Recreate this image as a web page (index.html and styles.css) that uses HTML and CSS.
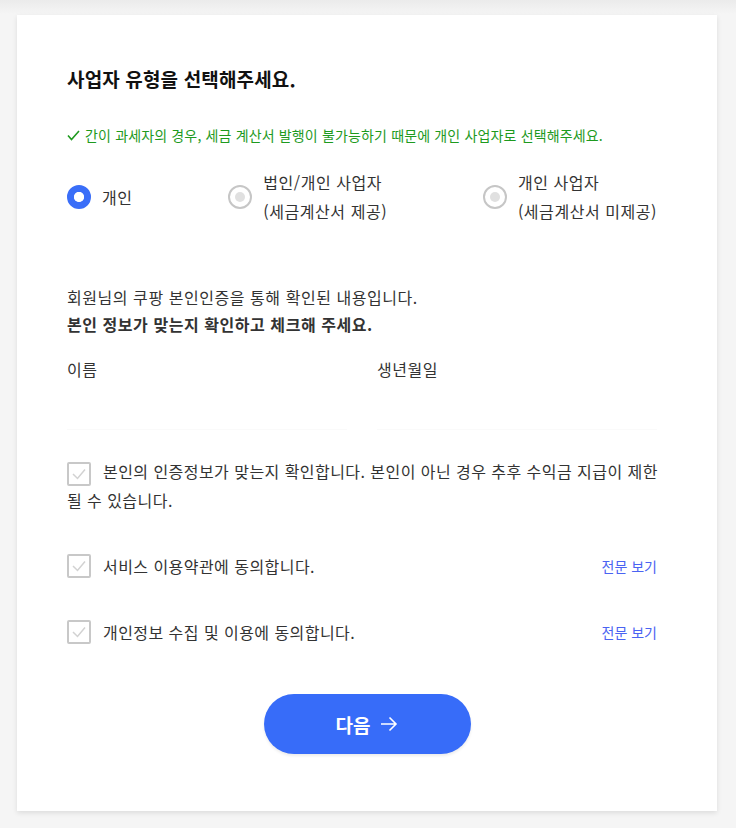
FILE: index.html
```html
<!DOCTYPE html>
<html lang="ko">

<head>
    <meta charset="UTF-8">
    <meta name="viewport" content="width=device-width, initial-scale=1.0">
    <title>사업자 유형 선택</title>
    <link rel="stylesheet" href="styles.css">
</head>

<body>
    <div class="card">
        <h2 class="title">사업자 유형을 선택해주세요.</h2>

        <p class="notice">
            <svg class="notice-check" width="13" height="11" viewBox="0 0 13 11">
                <polyline points="1,5.5 4.5,9.5 12,1" fill="none" stroke="#1e9a1e" stroke-width="1.6" />
            </svg>
            간이 과세자의 경우, 세금 계산서 발행이 불가능하기 때문에 개인 사업자로 선택해주세요.
        </p>

        <div class="types">
            <label class="type">
                <span class="radio on"></span>
                <span class="type-text">개인</span>
            </label>
            <label class="type">
                <span class="radio"></span>
                <span class="type-text">법인/개인 사업자<br>(세금계산서 제공)</span>
            </label>
            <label class="type">
                <span class="radio"></span>
                <span class="type-text">개인 사업자<br>(세금계산서 미제공)</span>
            </label>
        </div>

        <p class="info">
            회원님의 쿠팡 본인인증을 통해 확인된 내용입니다.<br>
            <b>본인 정보가 맞는지 확인하고 체크해 주세요.</b>
        </p>

        <div class="fields">
            <div class="field">
                <div class="field-label">이름</div>
                <div class="field-value"></div>
            </div>
            <div class="field">
                <div class="field-label">생년월일</div>
                <div class="field-value"></div>
            </div>
        </div>

        <ul class="agree">
            <li class="agree-item first"><span class="box"><svg width="20" height="20" viewBox="0 0 20 20"><polyline points="4,10 8.5,14.5 16,5.5" fill="none" stroke="#d2d2d2" stroke-width="1.5" /></svg></span>본인의 인증정보가 맞는지 확인합니다. 본인이 아닌 경우 추후 수익금 지급이 제한될 수 있습니다.</li>
            <li class="agree-item">
                <span class="box"><svg width="20" height="20" viewBox="0 0 20 20"><polyline points="4,10 8.5,14.5 16,5.5" fill="none" stroke="#d2d2d2" stroke-width="1.5" /></svg></span>
                <span class="agree-text">서비스 이용약관에 동의합니다.</span>
                <a class="more" href="#">전문 보기</a>
            </li>
            <li class="agree-item">
                <span class="box"><svg width="20" height="20" viewBox="0 0 20 20"><polyline points="4,10 8.5,14.5 16,5.5" fill="none" stroke="#d2d2d2" stroke-width="1.5" /></svg></span>
                <span class="agree-text">개인정보 수집 및 이용에 동의합니다.</span>
                <a class="more" href="#">전문 보기</a>
            </li>
        </ul>

        <div class="actions">
            <button class="next" type="button">
                다음
                <svg width="18" height="16" viewBox="0 0 18 16">
                    <path d="M1 8H16M9.5 1.5L16 8L9.5 14.5" fill="none" stroke="#fff" stroke-width="1.6" />
                </svg>
            </button>
        </div>
    </div>
</body>

</html>
```

FILE: styles.css
```css
html,
body {
    margin: 0;
    padding: 0;
}

body {
    background: #f5f5f5 linear-gradient(#ebebeb, #f5f5f5 14px) no-repeat;
    font-family: "Noto Sans CJK KR", "Noto Sans", sans-serif;
    color: #333;
    height: 828px;
    overflow: hidden;
}

.card {
    width: 600px;
    margin: 15px 0 0 17px;
    padding: 50px 50px 57px;
    background: #fff;
    box-shadow: 0 2px 5px rgba(0, 0, 0, 0.1);
}

p,
ul,
li,
h2 {
    margin: 0;
    padding: 0;
    list-style: none;
}

.title {
    font-size: 19px;
    letter-spacing: 0.15px;
    line-height: 27px;
    font-weight: bold;
    color: #111;
}

.notice {
    margin-top: 33px;
    font-size: 14px;
    letter-spacing: 0.15px;
    line-height: 20px;
    color: #1e9a1e;
    display: flex;
    align-items: center;
}

.notice-check {
    margin-right: 5px;
}

.types {
    margin: 23px 10px 0 0;
    display: flex;
    justify-content: space-between;
    align-items: center;
}

.type {
    display: flex;
    align-items: center;
    font-size: 16px;
    letter-spacing: 0.55px;
    line-height: 29px;
}

.radio {
    width: 24px;
    height: 24px;
    box-sizing: border-box;
    border-radius: 50%;
    border: 2px solid #c6c6c6;
    margin-right: 11px;
    display: flex;
    align-items: center;
    justify-content: center;
}

.radio::after {
    content: "";
    width: 10px;
    height: 10px;
    border-radius: 50%;
    background: #e0e0e0;
}

.radio.on {
    border: 7px solid #3a6ef8;
}

.radio.on::after {
    background: #fff;
}

.info {
    margin-top: 58px;
    font-size: 16px;
    letter-spacing: 0.55px;
    line-height: 27px;
}

.fields {
    margin: 19px 10px 0 0;
    display: grid;
    grid-template-columns: 1fr 1fr;
    gap: 30px;
}

.field-label {
    font-size: 16px;
    letter-spacing: 0.55px;
    line-height: 24px;
}

.field-value {
    height: 48px;
    border-bottom: 1px solid #fafafa;
}

.agree {
    margin: 27px 10px 0 0;
}

.agree-item {
    display: flex;
    align-items: flex-start;
    font-size: 16px;
    letter-spacing: 0.45px;
    line-height: 28px;
    margin-top: 38px;
}

.agree-item.first {
    margin: 0 -4px 0 0;
    display: block;
}

.box {
    flex: none;
    width: 24px;
    height: 24px;
    box-sizing: border-box;
    border: 2px solid #c8c8c8;
    border-radius: 2px;
    margin: 2px 12px 0 0;
    display: inline-flex;
    align-items: center;
    justify-content: center;
    vertical-align: -6px;
}

.first .box {
    margin-top: 0;
}

.agree-text {
    flex: 1;
}

.more {
    font-size: 14px;
    letter-spacing: 0;
    color: #4a63f2;
    text-decoration: none;
}

.actions {
    margin-top: 48px;
    display: flex;
    justify-content: center;
}

.next {
    width: 207px;
    height: 60px;
    border: none;
    border-radius: 30px;
    background: #376cf9;
    color: #fff;
    font-family: inherit;
    font-size: 19px;
    font-weight: bold;
    display: flex;
    align-items: center;
    justify-content: center;
    gap: 10px;
    box-shadow: 0 2px 3px rgba(0, 0, 0, 0.08);
}
```
